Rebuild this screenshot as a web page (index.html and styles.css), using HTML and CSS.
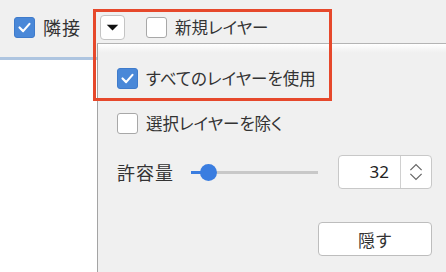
FILE: index.html
```html
<!DOCTYPE html>
<html lang="ja">
<head>
<meta charset="utf-8">
<link rel="stylesheet" href="styles.css">
</head>
<body>
<div class="app">
  <div class="toolbar">
    <label class="check tb-adj">
      <span class="box checked"><svg viewBox="0 0 21 21"><polyline points="5,10.5 9,14.5 16,6.5"/></svg></span>
      <span class="txt kanji">隣接</span>
    </label>
    <button class="drop"><svg viewBox="0 0 24 24"><polygon points="6,9 18,9 12,15"/></svg></button>
    <label class="check tb-new">
      <span class="box"></span>
      <span class="txt">新規レイヤー</span>
    </label>
  </div>
  <div class="below">
    <div class="canvas">
      <div class="canvas-band"></div>
      <div class="canvas-line"></div>
    </div>
    <div class="panel">
      <label class="check row row1">
        <span class="box checked"><svg viewBox="0 0 21 21"><polyline points="5,10.5 9,14.5 16,6.5"/></svg></span>
        <span class="txt">すべてのレイヤーを使用</span>
      </label>
      <label class="check row row2">
        <span class="box"></span>
        <span class="txt">選択レイヤーを除く</span>
      </label>
      <div class="row row3">
        <span class="txt kanji label">許容量</span>
        <div class="slider">
          <div class="track-fill"></div>
          <div class="track-rest"></div>
          <div class="thumb"></div>
        </div>
        <div class="spin">
          <div class="spin-val">32</div>
          <div class="spin-btn"><svg viewBox="0 0 32 32"><polyline points="10,14 16,8 22,14"/><polyline points="10,18 16,24 22,18"/></svg></div>
        </div>
      </div>
      <button class="hide">隠す</button>
    </div>
  </div>
  <div class="highlight"></div>
</div>
</body>
</html>
```
FILE: styles.css
```css
* { box-sizing: border-box; }
html, body { margin: 0; padding: 0; }
body {
  width: 446px;
  height: 272px;
  overflow: hidden;
  background: #f0f0f0;
  font-family: "Noto Sans CJK JP", "Noto Sans", sans-serif;
  color: #333;
}
.app {
  position: relative;
  width: 446px;
  height: 272px;
  display: flex;
  flex-direction: column;
}
.toolbar {
  height: 43px;
  padding-top: 11px;
  padding-left: 14px;
  display: flex;
  align-items: center;
  background: #f0f0f0;
}
.check {
  display: flex;
  align-items: center;
}
.box {
  width: 21px;
  height: 21px;
  border-radius: 3px;
  background: #fff;
  border: 1px solid #a8a8a8;
  flex: none;
  display: flex;
}
.box.checked {
  background: #4a88d8;
  border-color: #3f7bcb;
}
.box svg { width: 100%; height: 100%; }
.box svg polyline {
  fill: none;
  stroke: #fff;
  stroke-width: 2.4;
  stroke-linecap: round;
  stroke-linejoin: round;
}
.txt {
  font-size: 16.5px;
  line-height: 24px;
  font-feature-settings: "palt";
  margin-left: 8px;
  white-space: nowrap;
}
.txt.kanji {
  font-size: 18px;
  letter-spacing: 1px;
}
.tb-adj .txt { width: 38px; }
.drop {
  margin-left: 19px;
  width: 25px;
  height: 25px;
  padding: 0;
  border: 1px solid #c4c4c4;
  border-radius: 4px;
  background: #fff;
  display: flex;
}
.drop svg { width: 100%; height: 100%; }
.drop polygon { fill: #111; }
.tb-new { margin-left: 21px; }
.below {
  flex: 1;
  display: flex;
}
.canvas {
  width: 97px;
  background: #fff;
  display: flex;
  flex-direction: column;
}
.canvas-band { height: 14px; background: #f0f0f0; }
.canvas-line { height: 3px; background: #aec5e0; }
.panel {
  flex: 1;
  border-left: 1px solid #a4a4a4;
  border-top: 1px solid #b4b4b4;
  background: linear-gradient(#ffffff 0px, #f6f6f6 5px, #f0f0f0 9px);
  display: flex;
  flex-direction: column;
  padding: 19px 14px 0 19px;
}
.row {
  height: 30px;
  display: flex;
  align-items: center;
}
.row2 { margin-top: 15px; }
.row3 { margin-top: 17px; height: 34px; }
.row3 .label { margin-left: 0; width: 57px; }
.slider {
  position: relative;
  width: 127px;
  height: 17px;
  margin-left: 17px;
  display: flex;
  align-items: center;
}
.track-fill { width: 17px; height: 3px; background: #3a7de0; }
.track-rest { flex: 1; height: 3px; background: #c8c8c8; }
.thumb {
  position: absolute;
  left: 9px;
  top: 0;
  width: 17px;
  height: 17px;
  border-radius: 50%;
  background: #3a7de0;
}
.spin {
  margin-left: 20px;
  width: 94px;
  height: 34px;
  border: 1px solid #c8c8c8;
  border-radius: 4px;
  background: #fff;
  display: flex;
}
.spin-val {
  width: 62px;
  padding-right: 11px;
  text-align: right;
  font-size: 17px;
  line-height: 32px;
  font-family: "Noto Sans", sans-serif;
  color: #222;
  border-right: 1px solid #d0d0d0;
}
.spin-btn { flex: 1; display: flex; }
.spin-btn svg { width: 100%; height: 100%; }
.spin-btn polyline {
  fill: none;
  stroke: #666;
  stroke-width: 1.3;
}
.hide {
  align-self: flex-end;
  margin-top: 33px;
  width: 114px;
  height: 34px;
  border: 1px solid #bdbdbd;
  border-radius: 4px;
  background: #fff;
  font-family: "Noto Sans CJK JP", sans-serif;
  font-size: 17px;
  color: #333;
  padding: 0;
}
.highlight {
  position: absolute;
  left: 93px;
  top: 9px;
  width: 239px;
  height: 92px;
  border: 3px solid #e6482b;
  pointer-events: none;
}
```
